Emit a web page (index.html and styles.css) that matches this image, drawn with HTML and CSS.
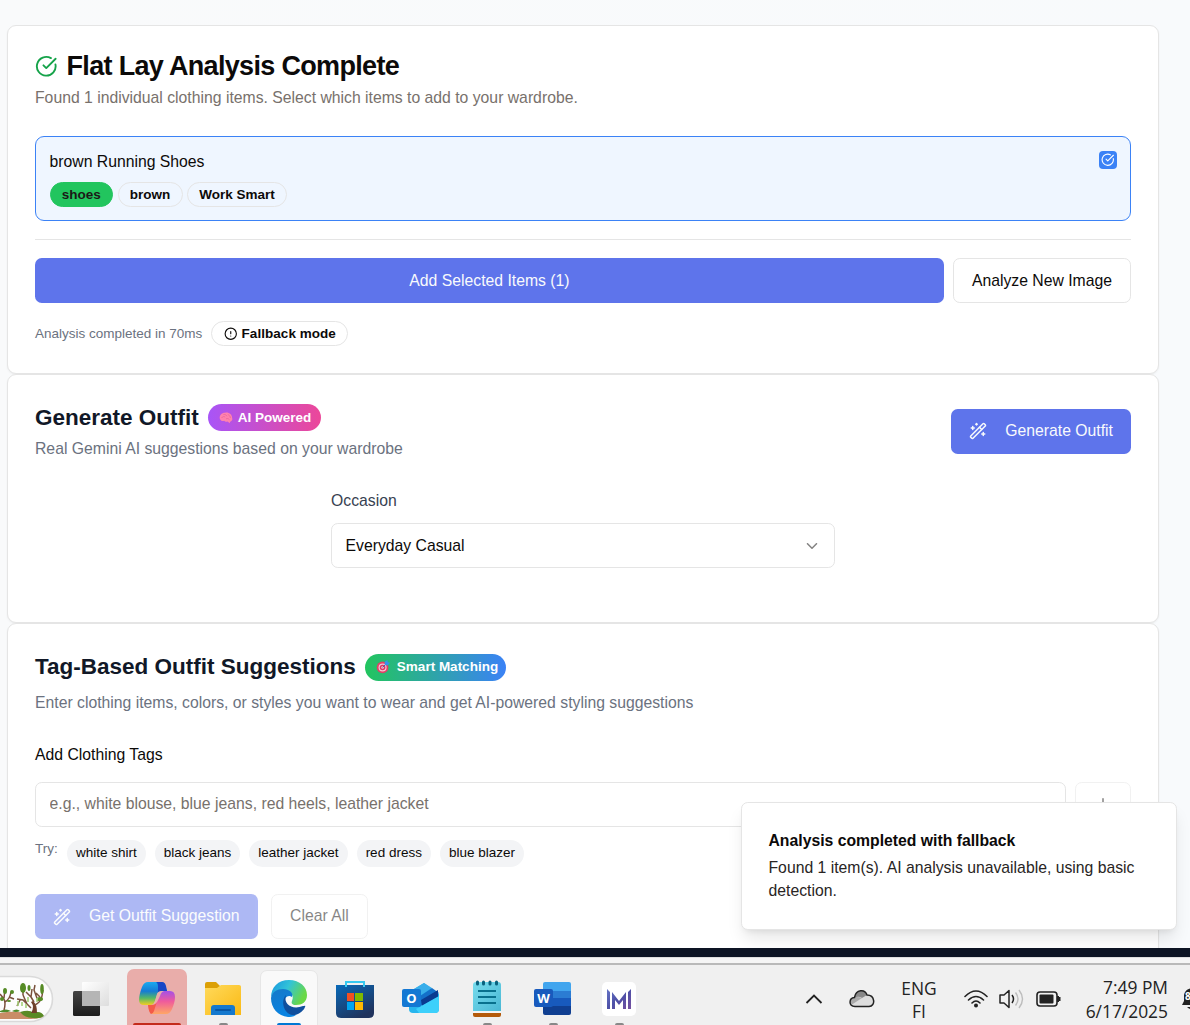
FILE: index.html
```html
<!DOCTYPE html>
<html lang="en">
<head>
<meta charset="utf-8">
<title>Wardrobe</title>
<link rel="stylesheet" href="styles.css">
</head>
<body>
<svg class="defs" width="0" height="0">
  <symbol id="check" viewBox="0 0 24 24"><path d="M21.801 10A10 10 0 1 1 17 3.335"/><path d="m9 11 3 3L22 4"/></symbol>
  <symbol id="wand" viewBox="0 0 24 24"><path d="m21.64 3.64-1.28-1.28a1.21 1.21 0 0 0-1.72 0L2.36 18.64a1.21 1.21 0 0 0 0 1.72l1.28 1.28a1.2 1.2 0 0 0 1.72 0L21.64 5.36a1.2 1.2 0 0 0 0-1.72"/><path d="m14 7 3 3M5 6v4M19 14v4M10 2v2M7 8H3M21 16h-4M11 3H9"/></symbol>
</svg>
<div class="page">
  <main class="cards">
    <section class="card analysis">
      <h1 class="title"><svg class="icon icon-lg green"><use href="#check"/></svg><span>Flat Lay Analysis Complete</span></h1>
      <p class="sub warm">Found 1 individual clothing items. Select which items to add to your wardrobe.</p>
      <div class="item">
        <div>
          <div class="item-name">brown Running Shoes</div>
          <div class="badges"><span class="badge solid">shoes</span><span class="badge">brown</span><span class="badge">Work Smart</span></div>
        </div>
        <span class="tick"><svg class="icon"><use href="#check"/></svg></span>
      </div>
      <div class="actions">
        <button class="btn primary grow">Add Selected Items (1)</button>
        <button class="btn outline">Analyze New Image</button>
      </div>
      <div class="status"><span class="status-text">Analysis completed in 70ms</span><span class="badge"><svg class="icon icon-xs" viewBox="0 0 24 24"><circle cx="12" cy="12" r="10"/><path d="M12 8v4M12 16h.01"/></svg>Fallback mode</span></div>
    </section>

    <section class="card generate">
      <header class="head">
        <div>
          <h2 class="heading"><span class="gen-title">Generate Outfit</span> <span class="pill ai">
            <svg class="emoji" viewBox="0 0 16 16"><path d="M1 9C0 5 3 2 7 2c4-1 8 2 8 6 1 2-1 4-2 4l-1 2-2-2c-2 1-3 0-4-1-2 1-4 0-5-2z" fill="#ff82ad"/><path d="M3 8c1-2 3-2 4-1M5 4c2 0 3 0 4 2M10 4c2 1 3 2 3 4M8 9c2-1 3 0 4 1" fill="none" stroke="#e5609b" stroke-width=".8"/></svg>AI Powered</span></h2>
          <p class="sub">Real Gemini AI suggestions based on your wardrobe</p>
        </div>
        <button class="btn primary"><svg class="icon icon-md"><use href="#wand"/></svg>Generate Outfit</button>
      </header>
      <div class="field">
        <label class="label">Occasion</label>
        <div class="select"><span>Everyday Casual</span><svg class="icon icon-md chev" viewBox="0 0 24 24"><path d="m6 9 6 6 6-6"/></svg></div>
      </div>
    </section>

    <section class="card tags">
      <h2 class="heading tag-heading"><span class="tag-title">Tag-Based Outfit Suggestions</span> <span class="pill smart">
        <svg class="emoji target" viewBox="0 0 16 16"><circle cx="7.5" cy="8.5" r="6.7" fill="#e34067"/><circle cx="7.5" cy="8.5" r="4.6" fill="#f5c6d6"/><circle cx="7.5" cy="8.5" r="3.2" fill="#dc3965"/><circle cx="7.5" cy="8.5" r="1.5" fill="#f5c6d6"/><path d="m7.5 8.5 4-4" stroke="#315da5" stroke-width="1"/><path d="m10 6 0-4 3-2 .5 2.500L16 3l-2.500 3z" fill="#3691ec"/></svg>Smart Matching</span></h2>
      <p class="sub">Enter clothing items, colors, or styles you want to wear and get AI-powered styling suggestions</p>
      <label class="tag-label">Add Clothing Tags</label>
      <div class="input-row">
        <input class="input" placeholder="e.g., white blouse, blue jeans, red heels, leather jacket">
        <button class="btn outline add dim"><svg class="icon icon-md" viewBox="0 0 24 24"><path d="M5 12h14M12 5v14"/></svg></button>
      </div>
      <div class="try"><span class="try-label">Try:</span><span class="chip">white shirt</span><span class="chip">black jeans</span><span class="chip">leather jacket</span><span class="chip">red dress</span><span class="chip">blue blazer</span></div>
      <div class="footer"><button class="btn primary dim"><svg class="icon icon-md"><use href="#wand"/></svg>Get Outfit Suggestion</button><button class="btn outline dim">Clear All</button></div>
    </section>
  </main>
  <aside class="toast"><strong class="toast-title">Analysis completed with fallback</strong><p class="toast-text">Found 1 item(s). AI analysis unavailable, using basic detection.</p></aside>
</div>
<div class="band"></div>
<div class="strip"></div>
<footer class="taskbar">
  <div class="search"><svg width="55" height="48" viewBox="0 0 55 48">
    <path d="M-2 1.5H30a22.500 22.500 0 0 1 0 45H-2z" fill="#fdfdfd" stroke="#dadada" stroke-width="1.600"/>
    <path d="M0 38q16-3 30 1 8 1 13 3-6 2-12 2H0z" fill="#c98d67"/>
    <path d="M0 36q6-3 11 0-5 2-11 1zM12 36q5-3 8 0-4 2-8 0z" fill="#4f8c2c"/>
    <path d="M20 37q10-3 13 1 8-3 11 3-4 3-11 2-8 0-13-6z" fill="#5a8a25"/>
    <path d="M31 38q4-6 0-11l2-1q4 3 4 12z" fill="#70402a"/>
    <path d="M35 30q6-3 7-9l1-6M34 27l-3-5 1-8M31 22l-5-5M38 26l-4-11 1-5M40 22l-4-4M31 33l-8-8-6-1M27 29l-4-9M23 20v-4M20 25l-3 6M4 35q2-7 0-11l-4-5M5 27q5-3 6-10M4 23l1-9M9 22l5 2" fill="none" stroke="#79503b" stroke-width="1.500"/>
    <g fill="#568b25"><ellipse cx="23" cy="13" rx="3" ry="5"/><ellipse cx="29" cy="13" rx="1.500" ry="3"/><ellipse cx="42" cy="14" rx="1.800" ry="5"/><ellipse cx="5" cy="16" rx="2" ry="3"/><ellipse cx="12" cy="17" rx="2" ry="2"/><ellipse cx="40" cy="24" rx="3" ry="2"/><ellipse cx="2" cy="24" rx="2" ry="2"/><ellipse cx="9" cy="26" rx="2" ry="1"/></g>
    <path d="M18 26v5M22 27v4M26 29v4M28 22v5M37 23v4" stroke="#a4cf79" stroke-width="1.600"/>
  </svg></div>
  <nav class="apps">
    <div class="app"><svg viewBox="0 0 40 40"><defs><linearGradient id="tv" x2="0" y2="1"><stop stop-color="#444"/><stop offset="1" stop-color="#1c1c1c"/></linearGradient><linearGradient id="tw" x2="1" y2="1"><stop stop-color="#fff"/><stop offset="1" stop-color="#ddd"/></linearGradient></defs><rect x="2" y="12" width="27" height="25" rx="1.5" fill="url(#tv)"/><rect x="11" y="3" width="27" height="24" rx="1" fill="url(#tw)"/><path d="M11 12h18v15H11z" fill="#b5b5b5"/></svg></div>
    <div class="app"><div class="tile alert"><svg viewBox="0 0 40 40"><defs><linearGradient id="ca" x2="0" y2="1"><stop stop-color="#1aaaf0"/><stop offset=".4" stop-color="#157bd4"/><stop offset=".7" stop-color="#55b866"/><stop offset="1" stop-color="#f3cd23"/></linearGradient><linearGradient id="cb" x2="0" y2="1"><stop stop-color="#a450e8"/><stop offset=".45" stop-color="#ef5b9c"/><stop offset="1" stop-color="#ffa765"/></linearGradient></defs><path d="M11 3h13q3 0 4 3l2 6h-5q-4 0-5 4l-2 6q-1 4-5 4H7q-5 0-5-5 0-5 3-13 2-5 6-5z" fill="url(#ca)"/><path d="M19 3h6q3 0 4 4l1 5h-5q-3 0-4 2V8q0-4-2-5z" fill="#1746c6"/><path d="M27 12h6q5 0 5 6 0 5-3 12-2 5-6 5H16q-3 0-4-4l-1-5h3q4 0 5-4l2-6q1-4 6-4z" fill="url(#cb)"/><path d="M11 26h4q4 0 5-4l-3 10q-1 3-3 3-2-1-3-9z" fill="#f45a49"/><path d="M20 15q1-3 5-3h2q-3 1-4 5l-3 6q-2 3-5 3 2-1 3-4z" fill="#e9adaa"/></svg><i class="run red"></i></div></div>
    <div class="app"><svg viewBox="0 0 40 40"><defs><linearGradient id="fo" x2="1" y2="1"><stop stop-color="#ffda5b"/><stop offset="1" stop-color="#fab914"/></linearGradient></defs><path d="M2 10V5q0-2 2-2h9l4 4h19q2 0 2 2v5H2z" fill="#dca006"/><path d="M2 9h12l4-3h18q2 0 2 2v28H2z" fill="url(#fo)"/><path d="M8 36v-7q0-3 3-3h18q3 0 3 3v7z" fill="#1579ce"/><path d="M13 31h14" stroke="#0757a6" stroke-width="2" stroke-linecap="round"/></svg><i class="run dot"></i></div>
    <div class="app"><div class="tile active"><svg viewBox="0 0 40 40"><defs><linearGradient id="ea" x2="1" y2=".4"><stop stop-color="#1793e0"/><stop offset=".5" stop-color="#32c3d8"/><stop offset="1" stop-color="#69d846"/></linearGradient><linearGradient id="eb" x2=".4" y2="1"><stop stop-color="#1678c8"/><stop offset="1" stop-color="#0883e2"/></linearGradient></defs><path d="M2 19C2 8 9 1 20 1c11 0 18 7 18 15 0 7-5 10-11 10-4 0-5-2-4-4 3-7-3-11-9-11S3 14 2 19z" fill="url(#ea)"/><path d="M2 19c1-6 6-9 12-9 6 0 11 4 9 8-4-3-8 1-8 6 0 7 6 12 12 12-3 2-6 2-8 2C9 37 2 29 2 19z" fill="url(#eb)"/><path d="M17 16c-6 6-2 21 9 20 5-1 9-5 10-8 1-2-1-1-2-1-10 4-20-1-17-11z" fill="#104f9d"/></svg><i class="run blue"></i></div></div>
    <div class="app"><svg viewBox="0 0 40 40"><defs><linearGradient id="st" x2=".6" y2="1"><stop stop-color="#0869b8"/><stop offset="1" stop-color="#20335d"/></linearGradient></defs><path d="M1 6h38v28q0 5-5 5H6q-5 0-5-5z" fill="url(#st)"/><path d="M11 8V3h18v5" fill="none" stroke="#36c8f0" stroke-width="2"/><path d="M12 14h7v8h-7z" fill="#f25022"/><path d="M20 14h8v8h-8z" fill="#7fba00"/><path d="M12 23h7v8h-7z" fill="#00a4ef"/><path d="M20 23h8v8h-8z" fill="#ffb900"/></svg></div>
    <div class="app"><svg viewBox="0 0 40 40"><path d="M8 13 23 4 38 15v15q0 4-4 4H12q-4 0-4-4z" fill="#27b5ed"/><path d="M8 13 23 4l8 5-19 12z" fill="#39aeea"/><path d="m16 19 15-10 7 5-20 14z" fill="#1470c9"/><path d="m20 21 17-10v7L21 27z" fill="#0a3b91"/><path d="m38 17-23 13 3 4h16q4 0 4-4z" fill="#3dd0fb"/><rect x="1" y="10" width="19" height="18" rx="2" fill="#1478d3"/><text x="10.5" y="24" class="glyph">O</text></svg></div>
    <div class="app"><svg viewBox="0 0 40 40"><path d="M6 33h28v3q0 2-2 2H8q-2 0-2-2z" fill="#b45a0b"/><path d="M6 31h28v3H6z" fill="#f4f4f4"/><defs><linearGradient id="no" x2="1" y2="1"><stop stop-color="#77dced"/><stop offset="1" stop-color="#49b7d4"/></linearGradient></defs><path d="M6 6q0-3 3-3h22q3 0 3 3v26H6z" fill="url(#no)"/><path d="M11 12h18M11 18h18M11 24h18" stroke="#08708d" stroke-width="2"/><path d="M10.500 3v2M16.500 3v2M23 3v2M29.500 3v2" stroke="#08617e" stroke-width="3" stroke-linecap="round"/></svg><i class="run dot"></i></div>
    <div class="app"><svg viewBox="0 0 40 40"><path d="M10 5q0-2 2-2h24q2 0 2 2v7H10z" fill="#41a5ee"/><path d="M10 12h28v7H10z" fill="#2b7cd3"/><path d="M10 19h28v8H10z" fill="#185abd"/><path d="M10 27h28v7q0 2-2 2H12q-2 0-2-2z" fill="#103f91"/><rect x="1" y="10" width="19" height="18" rx="2" fill="#185abd"/><text x="10.500" y="24" class="glyph">W</text></svg><i class="run dot"></i></div>
    <div class="app"><svg viewBox="0 0 40 40"><defs><linearGradient id="mm" x2="1" y2="1"><stop stop-color="#6574c5"/><stop offset=".5" stop-color="#4d50a7"/><stop offset="1" stop-color="#77509f"/></linearGradient></defs><rect x="3" y="3" width="34" height="34" rx="5" fill="#fff"/><path d="M8 10l3 3v17H8zM32 10l-3 3v17h3zM13 13l7 9 7-9v17h-3V21l-4 5-4-5v9h-3z" fill="url(#mm)"/></svg><i class="run dot"></i></div>
  </nav>
  <div class="tray">
    <svg class="up" width="18" height="12" viewBox="0 0 18 12"><path d="m1.500 10 7.500-7.500 7.500 7.500" fill="none" stroke="#222" stroke-width="1.800"/></svg>
    <svg class="cloud" width="26" height="18" viewBox="0 0 26 18"><path d="M6 16.500C-1 16 0 8 5.500 7.500 7-1 16-1 18 5c8 0 9 11 2 11.500z" fill="#ddd"/><path d="M5.500 7.500C7-1 16-1 18 5l-5 3Q10 6 5.500 7.500z" fill="#888"/><path d="M1.500 13C1 9 3 7 7 7q4 0 6 1L3 14.500z" fill="#aaa"/><path d="M6 16.500C-1 16 0 8 5.500 7.500 7-1 16-1 18 5c8 0 9 11 2 11.500z" fill="none" stroke="#222" stroke-width="1.500"/></svg>
    <div class="lang"><span>ENG</span><span>FI</span></div>
    <svg class="wifi" width="24" height="18" viewBox="0 0 24 18"><g fill="none" stroke="#222" stroke-width="1.600" stroke-linecap="round"><path d="M1 6.500Q12-4.500 23 6.500M4.500 10q7.500-7 15 0M8 13q4-4 8 0"/></g><circle cx="12" cy="15.500" r="2" fill="#222"/></svg>
    <svg class="vol" width="25" height="20" viewBox="0 0 25 20"><path d="M1 6h4l5-4.500v17L5 14H1z" fill="none" stroke="#222" stroke-width="1.500" stroke-linejoin="round"/><path d="M13 6q3 4 0 8" fill="none" stroke="#222" stroke-width="1.500"/><path d="M16.500 3.500q5 6.500 0 13M20 1q7 9 0 18" fill="none" stroke="#bdbdbd" stroke-width="1.400"/></svg>
    <svg class="battery" width="25" height="16" viewBox="0 0 25 16"><rect x="1" y="1" width="20" height="14" rx="3" fill="none" stroke="#222" stroke-width="1.600"/><rect x="3.500" y="3.500" width="14" height="9" rx="1" fill="#222"/><path d="M22 5v6M23.500 6v4" stroke="#222" stroke-width="2"/></svg>
    <div class="clock"><span>7:49 PM</span><span>6/17/2025</span></div>
    <svg class="bell" width="24" height="24" viewBox="0 0 24 24"><path d="M0 18 2 14V9C2 4 6 1 11 1s9 3 9 8v5l3 4z" fill="#222"/><path d="M5 20q5 5 10 0z" fill="#222"/><text x="5.800" y="13" class="glyph count">8</text></svg>
  </div>
</footer>
</body>
</html>
```
FILE: styles.css
```css
* { box-sizing: border-box; }
body { margin: 0; height: 1025px; overflow: hidden; font-family: "Liberation Sans", Arial, sans-serif; font-size: 15.75px; line-height: 22.5px; color: #0c0a09; }
h1, h2, p { margin: 0; }
button, input { font: inherit; }
.defs { display: block; position: absolute; }
.page { position: relative; height: 948px; overflow: hidden; padding: 25px 31px 0 7px; background: linear-gradient(90deg, #f9fafb, #f8fafc); }
.card { background: #fff; border: 1px solid #e5e5e5; border-radius: 9px; padding: 27px; box-shadow: 0 1px 2px rgba(0,0,0,.05); }
.analysis { height: 349px; }
.generate { height: 249px; }
.tags { height: 370px; }
.icon { width: 16px; height: 16px; fill: none; stroke: currentColor; stroke-width: 2; stroke-linecap: round; stroke-linejoin: round; flex: none; }
.icon-lg { width: 22.5px; height: 22.5px; }
.icon-md { width: 18px; height: 18px; }
.icon-xs { width: 13.5px; height: 13.5px; margin-right: 4.5px; }
.green { color: #16a34a; }

.title { display: flex; align-items: center; gap: 9px; height: 27px; font-size: 27px; line-height: 27px; letter-spacing: -0.675px; }
.sub { color: #6b7280; }
.warm { margin-top: 7px; color: #78716c; }
.item { display: flex; justify-content: space-between; height: 85px; margin-top: 26.5px; padding: 13.5px; border: 1px solid #3b82f6; border-radius: 9px; background: #eff6ff; }
.badges { display: flex; gap: 4.5px; margin-top: 9px; }
.badge { display: inline-flex; align-items: center; height: 25px; padding: 0 11.25px; border: 1px solid #e5e5e5; border-radius: 13px; color: #0c0a09; font-size: 13.5px; font-weight: 700; line-height: 18px; white-space: nowrap; }
.solid { background: #22c55e; border-color: #22c55e; color: #1c1917; }
.tick { display: grid; place-items: center; width: 18px; height: 18px; border-radius: 4px; background: #3b82f6; color: #fff; }
.tick .icon { width: 13.5px; height: 13.5px; }
.actions { display: flex; gap: 9px; margin-top: 18px; padding-top: 18px; border-top: 1px solid #e5e5e5; }
.actions .btn { padding-top: 1px; }
.btn { display: inline-flex; align-items: center; justify-content: center; gap: 18px; height: 45px; padding: 0 18px; border: 0; border-radius: 6.75px; color: #0c0a09; white-space: nowrap; }
.primary { background: #5e74eb; color: #f8fafc; }
.outline { border: 1px solid #e5e5e5; background: #fff; }
.grow { flex: 1; }
.dim { opacity: .5; }
.status { display: flex; align-items: center; gap: 9px; margin-top: 18px; color: #6b7280; font-size: 13.5px; }
.status-text { padding-top: 1px; }
.status .badge { letter-spacing: .04px; }

.head { display: flex; align-items: center; justify-content: space-between; height: 58px; }
.heading { display: flex; align-items: center; gap: 9px; height: 31px; color: #111827; font-size: 22.5px; line-height: 31px; }
.gen-title { margin-top: -1px; }
.head .sub { margin-top: 5px; margin-bottom: -1px; }
.pill { display: flex; align-items: center; height: 27px; padding: 0 9px 0 11px; border-radius: 14px; color: #fff; font-size: 13.5px; line-height: 18px; }
.ai { padding-right: 9.5px; background: linear-gradient(90deg, #a855f7, #ec4899); }
.smart { padding-right: 8px; padding-bottom: 1px; background: linear-gradient(90deg, #22c55e, #3b82f6); }
.emoji { width: 14px; height: 14px; margin-right: 5px; }
.target { margin-right: 7px; }
.field { width: 504px; margin: 30px auto 0; }
.label { display: block; color: #374151; }
.select { display: flex; align-items: center; justify-content: space-between; height: 45px; margin-top: 10.5px; padding: 1px 13.5px 0; border: 1px solid #e5e5e5; border-radius: 6.75px; }
.chev { opacity: .5; }

.tag-heading { margin-top: 1px; }
.tag-title { margin-top: -2px; }
.tags .sub { margin-top: 8.5px; }
.tag-label { display: block; margin-top: 29.5px; }
.input-row { display: flex; gap: 9px; margin-top: 15.5px; }
.input { flex: 1; height: 45px; padding: 0 13.5px 1px; border: 1px solid #e5e5e5; border-radius: 6.75px; color: #0c0a09; background: #fff; }
.input::placeholder { color: #78716c; opacity: 1; }
.add { width: 56px; }
.try { display: flex; gap: 9px; margin-top: 13px; font-size: 13.5px; }
.try-label { width: 23px; margin-top: -2px; color: #6b7280; }
.chip { display: flex; align-items: center; height: 27px; padding: 1px 9px 0; border-radius: 14px; background: #f3f4f6; font-size: 13.5px; }
.footer { display: flex; gap: 13.5px; margin-top: 27px; }
.footer .btn { padding-top: 1px; }

.toast { position: absolute; left: 741px; top: 802px; width: 436px; height: 128px; padding: 27px 27px 27px 26.5px; border: 1px solid #e5e5e5; border-radius: 6.75px; background: #fff; box-shadow: 0 11px 17px -3px rgba(0,0,0,.1), 0 4px 7px -4px rgba(0,0,0,.1); }
.toast-title { display: block; }
.toast-text { margin-top: 3px; line-height: 23px; color: #292524; }

.band { height: 9px; background: #0d1424; }
.strip { height: 8px; background: #f5f5f5; border-bottom: 2px solid #b9b9b9; border-top: 1px solid #dedede; }
.taskbar { display: flex; height: 60px; background: #f0f0f0; color: #222; font-family: "Open Sans", "Noto Sans", sans-serif; }
.search { flex: none; width: 58px; padding-top: 10px; }
.search svg { display: block; }
.apps { display: flex; flex: none; }
.app { position: relative; display: flex; justify-content: center; width: 66px; padding-top: 14px; }
.app svg { display: block; width: 40px; height: 40px; }
.tile { display: flex; justify-content: center; width: 60px; height: 64px; margin-top: -10px; padding-top: 10px; border-radius: 7px; }
.alert { background: #e9adaa; }
.active { width: 58px; margin-top: -9px; padding-top: 8px; background: #f9f9f9; border: 1px solid #e6e6e6; }
.run { position: absolute; left: 29px; top: 58px; width: 9px; height: 4px; border-radius: 3px; background: #888; }
.red { left: 9px; width: 48px; background: #c42b1c; }
.blue { left: 21px; width: 24px; background: #0078d4; }
.glyph { font: 700 13px "Open Sans", sans-serif; fill: #fff; text-anchor: middle; }
.count { font-size: 10px; }
.tray { display: flex; flex: none; align-items: center; margin-left: 153px; padding-top: 7px; }
.tray svg { flex: none; }
.cloud { margin-left: 26px; }
.lang { width: 50px; margin-left: 19px; text-align: center; }
.lang span, .clock span { display: block; font-size: 17.4px; line-height: 24px; white-space: nowrap; }
.lang span:first-child { position: relative; top: 1px; }
.wifi { margin-left: 20px; }
.vol { margin-left: 11px; }
.battery { margin-left: 12px; }
.clock { width: 90px; margin-left: 17px; text-align: right; }
.bell { margin-left: 14px; }
```
